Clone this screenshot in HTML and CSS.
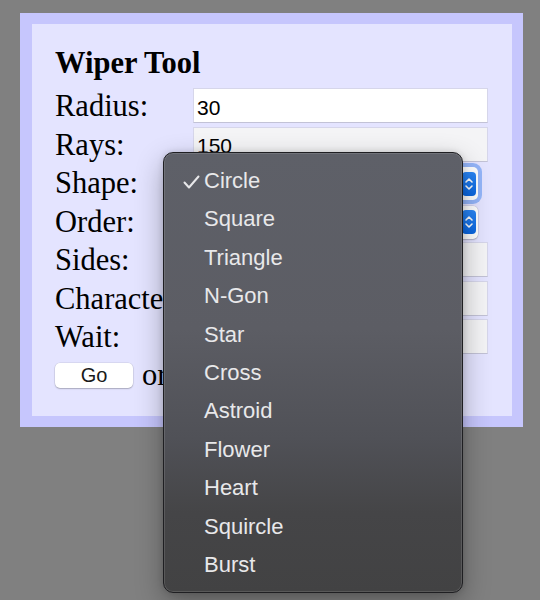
FILE: index.html
```html
<!DOCTYPE html>
<html lang="en">
<head>
<meta charset="utf-8">
<title>Wiper Tool</title>
<link rel="stylesheet" href="styles.css">
</head>
<body>
<div class="panel">
  <h1 class="title">Wiper Tool</h1>
  <div class="form">
    <label class="label">Radius:</label>
    <input class="text" type="text" value="30">
    <label class="label">Rays:</label>
    <input class="text text-shaded" type="text" value="150">
    <label class="label">Shape:</label>
    <div class="select select-focus"><span class="select-value">Circle</span><span class="stepper"><svg viewBox="0 0 14 24" width="14" height="24"><path d="M4 10 L7 7 L10 10 M4 14 L7 17 L10 14" fill="none" stroke="#fff" stroke-width="1.6" stroke-linecap="round" stroke-linejoin="round"/></svg></span></div>
    <label class="label">Order:</label>
    <div class="select"><span class="select-value">Random</span><span class="stepper"><svg viewBox="0 0 14 24" width="14" height="24"><path d="M4 10 L7 7 L10 10 M4 14 L7 17 L10 14" fill="none" stroke="#fff" stroke-width="1.6" stroke-linecap="round" stroke-linejoin="round"/></svg></span></div>
    <label class="label">Sides:</label>
    <input class="text text-shaded" type="text" value="5">
    <label class="label">Characters:</label>
    <input class="text text-shaded" type="text" value="*">
    <label class="label">Wait:</label>
    <input class="text text-shaded" type="text" value="10">
  </div>
  <div class="actions">
    <button class="go" type="button">Go</button>
    <span class="or">or press Enter</span>
  </div>
</div>

<div class="menu">
  <div class="menu-item checked"><svg class="check" viewBox="0 0 17 14" width="17" height="14"><path d="M1.5 7.5 L6 12.5 L15.5 1.5" fill="none" stroke="#e8e8ea" stroke-width="2" stroke-linecap="round" stroke-linejoin="round"/></svg>Circle</div>
  <div class="menu-item">Square</div>
  <div class="menu-item">Triangle</div>
  <div class="menu-item">N-Gon</div>
  <div class="menu-item">Star</div>
  <div class="menu-item">Cross</div>
  <div class="menu-item">Astroid</div>
  <div class="menu-item">Flower</div>
  <div class="menu-item">Heart</div>
  <div class="menu-item">Squircle</div>
  <div class="menu-item">Burst</div>
</div>
</body>
</html>
```

FILE: styles.css
```css
html, body {
  margin: 0;
  padding: 0;
}

body {
  background: #808080;
  padding: 13px 0 0 20px;
  height: 600px;
  box-sizing: border-box;
  overflow: hidden;
  font-family: "Liberation Serif", "Times New Roman", serif;
}

.panel {
  width: 503px;
  box-sizing: border-box;
  border-style: solid;
  border-color: #c6c6fd;
  border-width: 11px 11px 11px 12px;
  background: #e4e4ff;
  padding: 22px 24px 23px 23px;
}

.title {
  margin: 0;
  font-size: 30.5px;
  line-height: 34.5px;
  font-weight: 700;
  color: #000;
}

.form {
  margin-top: 7.5px;
  display: grid;
  grid-template-columns: 138px 295px;
  grid-auto-rows: 35px;
  row-gap: 3.5px;
}

.label {
  font-size: 30.5px;
  line-height: 36px;
  color: #000;
  white-space: nowrap;
}

.text {
  -webkit-appearance: none;
  appearance: none;
  margin: 0;
  width: 295px;
  height: 35px;
  box-sizing: border-box;
  border: 1px solid #d6d6ea;
  border-bottom-color: #c2c2d6;
  border-radius: 0;
  background: #fff;
  padding: 4px 3px 0;
  font-family: "Liberation Sans", Arial, sans-serif;
  font-size: 21px;
  color: #000;
  outline: none;
}

.text-shaded {
  background: #f4f4f6;
}

.select {
  position: relative;
  margin-top: 2px;
  width: 285px;
  height: 33px;
  box-sizing: border-box;
  background: #fff;
  border-radius: 5px;
  box-shadow: 0 0 0 0.5px rgba(0, 0, 0, 0.12), 0 1px 1.5px rgba(0, 0, 0, 0.18);
  display: flex;
  align-items: center;
  justify-content: space-between;
  padding: 0 2px 0 8px;
  font-family: "Liberation Sans", Arial, sans-serif;
  font-size: 20px;
  color: #000;
}

.select-focus {
  box-shadow: 0 0 0 4px rgba(95, 150, 245, 0.6);
}

.stepper {
  width: 14px;
  height: 24px;
  border-radius: 4px;
  background: linear-gradient(#2b86f5, #0a66e0);
  display: flex;
}

.actions {
  margin-top: 3.5px;
  height: 35px;
  display: flex;
  align-items: center;
  gap: 9px;
}

.go {
  -webkit-appearance: none;
  appearance: none;
  margin: 0;
  width: 78px;
  height: 25px;
  border: none;
  border-radius: 5px;
  background: #fff;
  box-shadow: 0 0 0 0.5px rgba(0, 0, 0, 0.1), 0 1px 1.5px rgba(0, 0, 0, 0.22);
  font-family: "Liberation Sans", Arial, sans-serif;
  font-size: 20px;
  line-height: 25px;
  padding: 0;
  color: #1a1a1a;
}

.or {
  font-size: 30.5px;
  line-height: 35px;
  color: #000;
  white-space: nowrap;
}

.menu {
  position: absolute;
  left: 163px;
  top: 152px;
  width: 300px;
  height: 441px;
  box-sizing: border-box;
  padding: 9px 0 0;
  border-radius: 10px;
  border: 1px solid #1f1f22;
  background: linear-gradient(#5e6068 0%, #5c5d64 40%, #505157 65%, #454547 82%, #424243 100%);
  box-shadow: inset 0 0 0 1px rgba(255, 255, 255, 0.12), 0 10px 28px rgba(0, 0, 0, 0.3), 0 0 6px rgba(0, 0, 0, 0.15);
  font-family: "Liberation Sans", Arial, sans-serif;
}

.menu-item {
  position: relative;
  height: 38.4px;
  line-height: 38.4px;
  padding-left: 40px;
  font-size: 22px;
  color: #e8e8ea;
}

.check {
  position: absolute;
  left: 19px;
  top: 13px;
}
```
